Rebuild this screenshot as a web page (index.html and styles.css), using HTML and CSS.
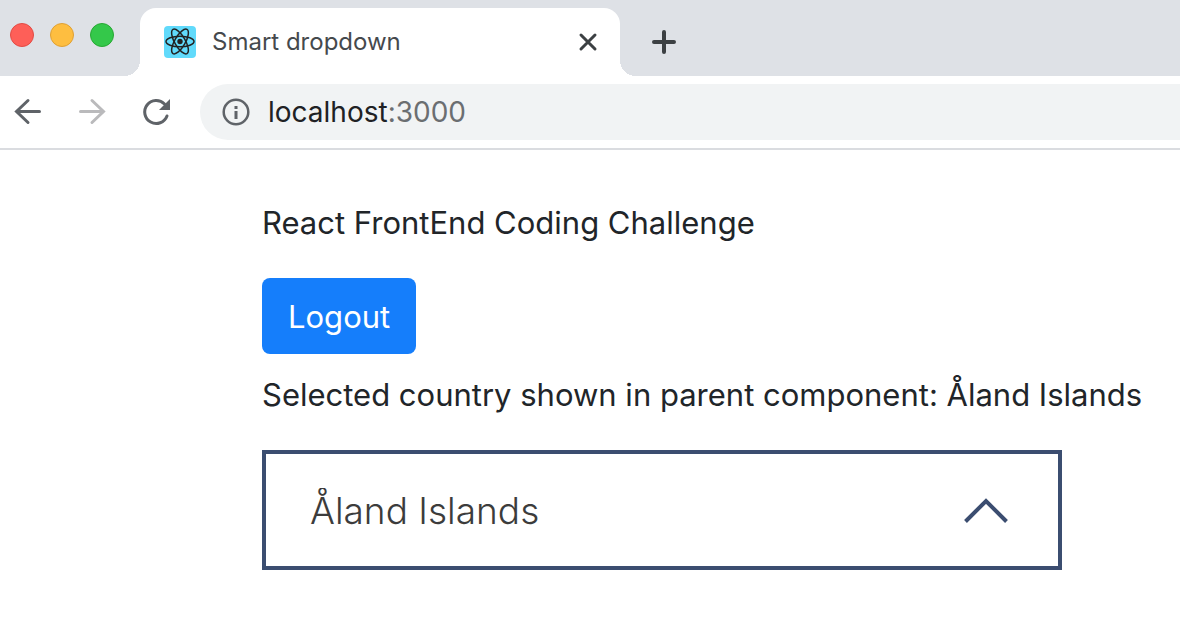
FILE: index.html
```html
<!DOCTYPE html>
<html lang="en">
<head>
<meta charset="utf-8">
<title>Smart dropdown</title>
<link rel="stylesheet" href="styles.css">
</head>
<body>
<header class="browser">
  <div class="tab-strip">
    <div class="lights">
      <button class="light light-close" aria-label="Close window"></button>
      <button class="light light-minimize" aria-label="Minimize window"></button>
      <button class="light light-zoom" aria-label="Zoom window"></button>
    </div>
    <div class="tab">
      <svg class="favicon" viewBox="0 0 32 32" aria-hidden="true">
        <rect width="32" height="32" rx="4" fill="#61dafb"/>
        <g fill="none" stroke="#222" stroke-width="1.5">
          <ellipse cx="16" cy="15.500" rx="14" ry="5.300"/>
          <ellipse cx="16" cy="15.500" rx="14" ry="5.300" transform="rotate(60 16 15.500)"/>
          <ellipse cx="16" cy="15.500" rx="14" ry="5.300" transform="rotate(120 16 15.500)"/>
        </g>
        <circle cx="16" cy="15.500" r="2.700" fill="#222"/>
      </svg>
      <span class="tab-title">Smart dropdown</span>
      <button class="icon-button tab-close" aria-label="Close tab">
        <svg viewBox="0 0 40 40"><path d="M13 13 27 27M27 13 13 27" stroke-width="3"/></svg>
      </button>
    </div>
    <button class="icon-button new-tab" aria-label="New tab">
      <svg viewBox="0 0 40 40"><path d="M10 20H30M20 10V30" stroke-width="4"/></svg>
    </button>
  </div>
  <nav class="toolbar">
    <button class="icon-button" aria-label="Back">
      <svg viewBox="0 0 40 40"><path d="M31.500 19.500H9M20 8.500 8.500 19.500 20 30.500" stroke-width="3"/></svg>
    </button>
    <button class="icon-button" aria-label="Forward" disabled>
      <svg viewBox="0 0 40 40"><path d="M8.500 19.500H31M20 8.500 31.500 19.500 20 30.500" stroke-width="3"/></svg>
    </button>
    <button class="icon-button" aria-label="Reload">
      <svg viewBox="0 0 40 40"><path d="M31 24A11.500 11.500 0 1 1 28.500 12" stroke-width="3"/><path d="M34 7V18H23Z" fill="currentColor" stroke="none"/></svg>
    </button>
    <div class="address">
      <svg class="info" viewBox="0 0 28 28" aria-hidden="true">
        <circle cx="14" cy="14" r="12.300" fill="none" stroke="#5f6368" stroke-width="2.500"/>
        <path d="M14 8V11M14 13V21" fill="none" stroke="#5f6368" stroke-width="3"/>
      </svg>
      <div class="url" role="textbox" aria-label="Address" contenteditable="true" spellcheck="false">localhost<span class="port">:3000</span></div>
    </div>
  </nav>
</header>
<main class="page">
  <p class="text">React FrontEnd Coding Challenge</p>
  <button class="logout">Logout</button>
  <p class="text">Selected country shown in parent component: Åland Islands</p>
  <div class="dropdown">
    <select class="country" aria-label="Country">
      <option>Åland Islands</option>
    </select>
    <svg class="chevron" viewBox="0 0 44 26" aria-hidden="true"><path d="M1.500 24.500 22 4 42.500 24.500" fill="none" stroke="#3b4d70" stroke-width="4"/></svg>
  </div>
</main>
</body>
</html>
```
FILE: styles.css
```css
* {
  box-sizing: border-box;
}

body {
  margin: 0;
  background: #fff;
  color: #212529;
  font-family: Inter, "Liberation Sans", sans-serif;
}

button {
  border: 0;
  padding: 0;
  font: inherit;
}

.browser {
  border-bottom: 2px solid #dadce0;
}

.tab-strip {
  display: flex;
  align-items: flex-start;
  padding: 8px 10px 0;
  background: #dee1e6;
}

.lights {
  display: flex;
  flex: none;
  gap: 16px;
  width: 130px;
  padding-top: 15px;
}

.light {
  width: 24px;
  height: 24px;
  border: 1px solid;
  border-radius: 50%;
}

.light-close {
  background: #fe5f58;
  border-color: #e24b44;
}

.light-minimize {
  background: #febe40;
  border-color: #dfa034;
}

.light-zoom {
  background: #34c84a;
  border-color: #27a833;
}

.tab {
  position: relative;
  display: flex;
  align-items: center;
  width: 480px;
  height: 68px;
  padding: 0 12px 0 24px;
  border-radius: 16px 16px 0 0;
  background: #fff;
}

.tab::before,
.tab::after {
  content: "";
  position: absolute;
  bottom: 0;
  width: 16px;
  height: 16px;
}

.tab::before {
  right: 100%;
  background: radial-gradient(circle at 0 0, transparent 16px, #fff 16px);
}

.tab::after {
  left: 100%;
  background: radial-gradient(circle at 100% 0, transparent 16px, #fff 16px);
}

.favicon {
  width: 32px;
  height: 32px;
}

.tab-title {
  flex: 1;
  margin-left: 16px;
  color: #45494d;
  font-size: 24px;
  line-height: 32px;
}

.icon-button {
  flex: none;
  width: 40px;
  height: 40px;
  background: none;
  color: #5f6368;
}

.icon-button:disabled {
  color: #bababc;
}

.icon-button svg {
  display: block;
  fill: none;
  stroke: currentColor;
  stroke-linecap: round;
}

.tab-close,
.new-tab {
  color: #3c4043;
}

.new-tab {
  margin: 14px 0 0 24px;
}

.toolbar {
  display: flex;
  align-items: center;
  gap: 24px;
  padding: 8px 0 8px 8px;
}

.address {
  display: flex;
  flex: 1;
  align-items: center;
  gap: 18px;
  height: 56px;
  padding-left: 22px;
  border-radius: 28px 0 0 28px;
  background: #f1f3f4;
}

.info {
  width: 28px;
  height: 28px;
}

.url {
  flex: 1;
  color: #202124;
  font-size: 28px;
  line-height: 40px;
}

.port {
  color: #6b6e71;
}

.page {
  padding: 48px 24px 48px 262px;
}

.text {
  margin: 0;
  font-size: 31px;
  line-height: 50px;
}

.logout {
  display: block;
  height: 76px;
  margin: 30px 0 16px;
  padding: 0 26px;
  border-radius: 8px;
  background: #157efb;
  color: #fff;
  font-size: 31px;
}

.dropdown {
  display: grid;
  align-items: center;
  max-width: 800px;
  margin-top: 30px;
}

.country,
.chevron {
  grid-area: 1 / 1;
}

.country {
  appearance: none;
  width: 100%;
  height: 120px;
  padding: 0 96px 0 44px;
  border: 4px solid #3b4d70;
  border-radius: 0;
  background: #fff;
  color: #3c3c3c;
  font-family: inherit;
  font-size: 37px;
  font-weight: 300;
}

.chevron {
  justify-self: end;
  width: 44px;
  height: 26px;
  margin-right: 54px;
  pointer-events: none;
}
```
